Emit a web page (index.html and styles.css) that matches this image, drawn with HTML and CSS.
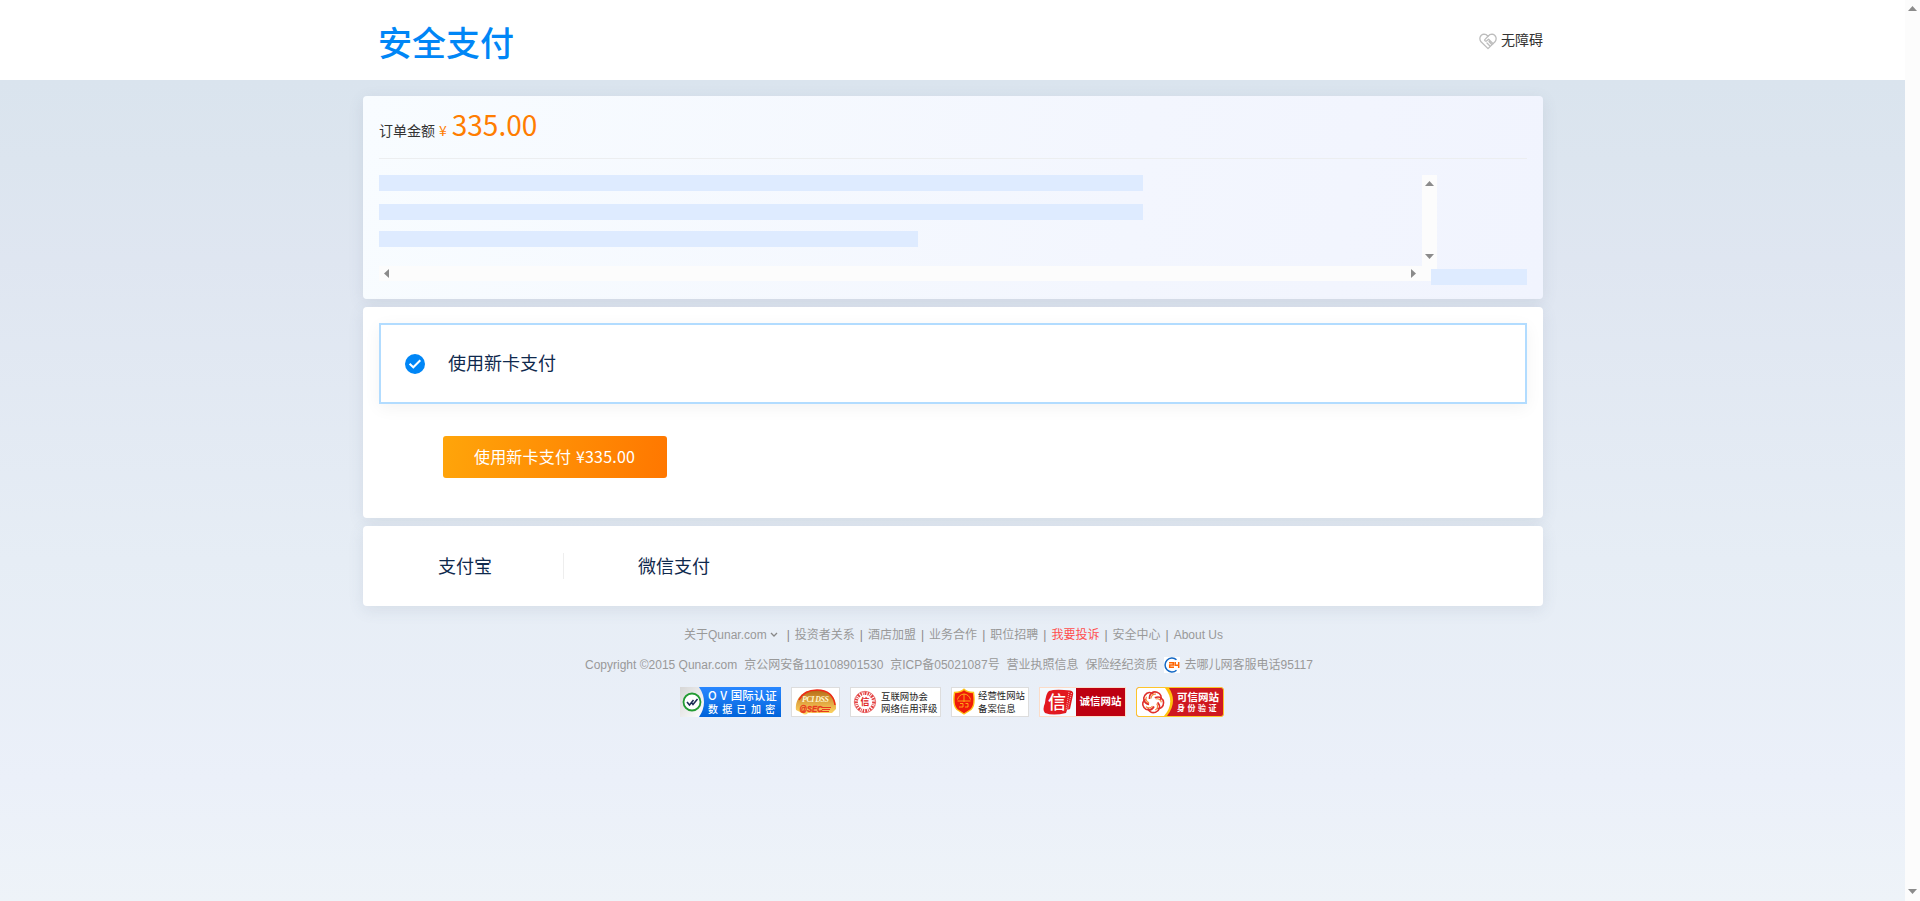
FILE: index.html
```html
<!DOCTYPE html>
<html lang="zh-CN">
<head>
<meta charset="utf-8">
<title>安全支付</title>
<link rel="stylesheet" href="styles.css">
</head>
<body>
<div class="window">
<div class="page">
  <header class="header">
    <div class="wrap header-inner">
      <h1 class="brand">安全支付</h1>
      <a class="access">
        <svg width="18" height="17" viewBox="0 0 18 17" fill="none" stroke="#bdbdbd" stroke-width="1.3" stroke-linejoin="round" stroke-linecap="round"><path d="M9 15.6 2 8.8C-.2 6 1 1.5 5 1.2c1.800 0 3 .8 4 2.100 1-1.300 2.200-2.100 4-2.100 4 .3 5.200 4.800 3 7.600z"/><path d="M9 3.300 5.800 6.600c-.6 1.400 1 2 2 1.200l1.800-1.500 4.500 4.300M8 10l2.700 2.800M10 8.500l2.600 2.800"/></svg>
        <span>无障碍</span>
      </a>
    </div>
  </header>
  <main class="wrap main">
    <section class="card order">
      <div class="amount"><span class="amount-label">订单金额</span><span class="yen">¥</span><span class="price">335.00</span></div>
      <div class="detail">
        <div class="scrollbox">
          <div class="lines"><i class="bar"></i><i class="bar second"></i><i class="bar short"></i></div>
          <div class="vbar"><i class="up"></i><i class="down"></i></div>
          <div class="hbar"><i class="left"></i><i class="right"></i></div>
        </div>
        <i class="bar toggle"></i>
      </div>
    </section>
    <section class="card newcard">
      <div class="choice">
        <svg width="20" height="20" viewBox="0 0 20 20"><circle cx="10" cy="10" r="10" fill="#0086f6"/><path d="M4.600 9.800 8.300 13.300 15.300 6.200" fill="none" stroke="#fff" stroke-width="2"/></svg>
        <span>使用新卡支付</span>
      </div>
      <button class="pay">使用新卡支付 ¥335.00</button>
    </section>
    <section class="card third">
      <div class="way ali">支付宝</div>
      <div class="way">微信支付</div>
    </section>
  </main>
  <footer class="footer">
    <nav class="links">
      <a>关于Qunar.com</a><svg class="chev" width="8" height="6" viewBox="0 0 8 6" fill="none" stroke="#888" stroke-width="1.300"><path d="M1 1l3 3 3-3"/></svg>
      <i>|</i><a>投资者关系</a><i>|</i><a>酒店加盟</a><i>|</i><a>业务合作</a><i>|</i><a>职位招聘</a><i>|</i><a class="red">我要投诉</a><i>|</i><a>安全中心</a><i>|</i><a>About Us</a>
    </nav>
    <div class="copy">
      <span>Copyright ©2015 Qunar.com</span><span>京公网安备110108901530</span><span>京ICP备05021087号</span><span>营业执照信息</span><span>保险经纪资质</span>
      <svg class="service" width="16" height="16" viewBox="0 0 16 16"><path fill="#fff" d="M0 0h16v16H0z"/><path d="M12.500 2.800A6.900 6.900 0 1 0 12.500 13.200" fill="none" stroke="#1267c4" stroke-width="1.500"/><path d="M5 5.700h4.300v2.300H5.700v2.300h4.300M11.200 5v3.300h4M14.700 5v6" fill="none" stroke="#f60" stroke-width="1.500"/></svg><span>去哪儿网客服电话95117</span>
    </div>
    <div class="badges">
      <div class="badge ov">
        <svg width="25" height="30" viewBox="0 0 25 30"><defs><linearGradient id="silver" y2="1"><stop stop-color="#d6d6d6"/><stop offset="1" stop-color="#fff"/></linearGradient></defs><path d="M0 0h19q10 15 0 30H0z" fill="url(#silver)"/><circle cx="12" cy="15" r="8.500" fill="#fff" stroke="#229b32" stroke-width="1.800"/><path d="m7 15 2.500 3 4-5M11.500 15.500l1.500 2 4.500-5.500" fill="none" stroke="#1c2a55" stroke-width="1.600"/></svg>
        <div class="ov-text"><b class="ov-top">O V 国际认证</b><b class="ov-bottom">数据已加密</b></div>
      </div>
      <div class="badge pci">
        <svg width="47" height="28" viewBox="0 0 47 28"><defs><linearGradient id="gold" x2="0" y2="1"><stop stop-color="#b36b16"/><stop offset=".45" stop-color="#dea03c"/><stop offset="1" stop-color="#ffd965"/></linearGradient></defs><path d="M4 22C3 11 10 2 24 2s21 8 20 19l-4 4H16q-3 3-6 0z" fill="url(#gold)"/><path d="M7 12Q12 2 25 2q16 0 18 15" fill="none" stroke="#ef2a16" stroke-width="1.500"/><text x="10" y="13.500" textLength="27" font-family="Liberation Serif" font-style="italic" font-size="8" font-weight="bold" fill="#fff8d0">PCI DSS</text><text x="7.500" y="24" textLength="23" lengthAdjust="spacingAndGlyphs" font-family="Liberation Sans" font-style="italic" font-size="8.500" font-weight="bold" fill="#e8391d" stroke="#e8391d" stroke-width=".4">@SEC</text><path d="M30 19.500h9M30 21.500h8M29 23.500h8" stroke="#e8391d"/></svg>
      </div>
      <div class="badge credit">
        <svg width="24" height="26" viewBox="0 0 24 26"><circle cx="12" cy="13" r="8.800" fill="none" stroke="#e34242" stroke-width="3.400" stroke-dasharray="1.500 1 .8 .9 2 1.100"/><circle cx="12" cy="13" r="10.700" fill="none" stroke="#e34242" stroke-width=".7"/><circle cx="12" cy="13" r="6" fill="#fff"/><text x="7.500" y="16.300" font-family="Noto Sans CJK SC" font-size="9" font-weight="bold" fill="#df2020">信</text></svg>
        <p>互联网协会<br>网络信用评级</p>
      </div>
      <div class="badge record">
        <svg width="25" height="28" viewBox="0 0 25 28"><path d="M12 1.300Q15 4.500 21.500 4.500q2 13-2.500 17-3 2-7 4.500-4-2.500-7-4.500Q.5 17.500 2.500 4.500 9 4.500 12 1.300z" fill="#ef1a08" stroke="#ffc21a" stroke-width="1.400"/><path d="M5.500 11.500q1.500-5 6.500-5.500 5 .5 6.500 5.500M5.500 13h13M12 6v8M8 15.500h3v3.500H7M13.500 15.500H16v3.500h-3" fill="none" stroke="#ffb31a" stroke-width=".9"/></svg>
        <p>经营性网站<br>备案信息</p>
      </div>
      <div class="badge honest">
        <svg width="36" height="28" viewBox="0 0 36 28"><path d="M9 3Q15 1 30 2.500q4 .5 3 4.500l-3 14-3 1-1 3Q13 28 5 25q-3-3 0-10Q6 5 9 3z" fill="#e21820"/><path d="M29 4l-3 18M31.500 5l-4 17" stroke="#fff" stroke-width=".7" stroke-dasharray="1 1"/><text x="8" y="20.500" font-family="Noto Sans CJK SC" font-size="18" font-weight="500" fill="#fff">信</text></svg>
        <b>诚信网站</b>
      </div>
      <div class="badge trust">
        <svg width="38" height="28" viewBox="0 0 38 28"><path d="M0 0h32q9 14-2 28H0z" fill="#ffc20c"/><path d="M0 0h28q11 14-1 28H0z" fill="#fff"/><g fill="none" stroke-width="1.600"><path id="petal" stroke="#e0302a" d="M12.500 11C12 5.500 16 3 20 4.200 24 5.500 25 9 23.500 12"/><use href="#petal" transform="rotate(72 16 14)"/><use href="#petal" transform="rotate(144 16 14)"/><use href="#petal" transform="rotate(216 16 14)"/><use href="#petal" transform="rotate(288 16 14)"/><path id="swirl" stroke="#f58a3a" stroke-width="1.200" d="M14 10.500c0-3 2.500-4.800 5-4.300"/><use href="#swirl" transform="rotate(72 16 14)"/><use href="#swirl" transform="rotate(144 16 14)"/><use href="#swirl" transform="rotate(216 16 14)"/><use href="#swirl" transform="rotate(288 16 14)"/></g></svg>
        <div class="trust-text"><b>可信网站</b><b class="small">身份验证</b></div>
      </div>
    </div>
  </footer>
</div>
<div class="page-scroll"><i class="up"></i><i class="down"></i></div>
</div>
</body>
</html>
```
FILE: styles.css
```css
* { box-sizing: border-box; }
body { margin: 0; overflow: hidden; font-family: "Liberation Sans", "Noto Sans CJK SC", sans-serif; color: #333; }
i { font-style: normal; }
p, h1 { margin: 0; }
svg { display: block; flex: none; }
.window { display: flex; height: 901px; }
.page { width: 1905px; height: 901px; background: linear-gradient(#dae4ee 80px, #dce5ef 160px, #dfe6f1 260px, #e6edf5 560px, #ebf0f9 780px, #eef3f8 901px); }
.wrap { width: 1180px; margin: 0 0 0 363px; }
.header { height: 80px; background: #fff; }
.header-inner { height: 80px; display: flex; justify-content: space-between; padding-left: 16px; }
.brand { font: 500 34px/80px "Noto Sans CJK SC", sans-serif; color: #0086f6; padding-top: 2px; margin-left: -1px; }
.access { display: flex; align-items: flex-start; gap: 4px; font: 14px/20px "Noto Sans CJK SC", sans-serif; padding-top: 29px; }
.access svg { margin-top: 4px; }
.main { padding-top: 16px; display: flex; flex-direction: column; gap: 8px; }
.card { background: #fff; border-radius: 4px; box-shadow: 0 4px 16px rgba(69, 88, 115, .11); }
.order { height: 203px; padding: 0 16px; background: linear-gradient(100deg, #f8fcff, #f3f6fe 65%, #f1f4fe); }
.amount { height: 63px; border-bottom: 1px solid #eceef0; display: flex; align-items: baseline; font: 14px/57px "Noto Sans CJK SC", sans-serif; }
.yen { color: #ff7d00; margin: 0 5px 0 4px; }
.price { color: #ff7d00; font-size: 28px; }
.detail { display: flex; align-items: flex-end; margin-top: 16px; height: 110px; }
.scrollbox { width: 1052px; height: 110px; display: grid; grid-template-columns: 1043px 15px; grid-template-rows: 91px 15px; }
.bar { display: block; width: 764px; height: 16px; background: #deebff; }
.second { margin-top: 13px; }
.short { width: 539px; margin-top: 11px; }
.toggle { width: 96px; position: relative; }
.vbar, .hbar, .page-scroll { background: #fcfcfc; display: flex; justify-content: space-between; align-items: center; }
.vbar { flex-direction: column; padding: 6px 0 7px; }
.hbar { grid-column: 1 / 3; padding: 0 21px 0 5px; }
.up, .down { width: 9px; height: 5px; background: #8b8b8b; }
.up { clip-path: polygon(50% 0, 100% 100%, 0 100%); }
.down { clip-path: polygon(0 0, 100% 0, 50% 100%); }
.left, .right { width: 5px; height: 9px; background: #8b8b8b; }
.left { clip-path: polygon(0 50%, 100% 0, 100% 100%); }
.right { clip-path: polygon(0 0, 100% 50%, 0 100%); }
.page-scroll { width: 15px; flex-direction: column; padding: 6px 0 7px; }
.newcard { height: 211px; padding: 16px; }
.choice { height: 81px; border: 2px solid #b2dcff; background: #fff; box-shadow: 0 4px 16px rgba(0, 0, 0, .05); display: flex; align-items: center; gap: 23px; padding-left: 24px; font: 400 18px/26px "Noto Sans CJK SC", sans-serif; color: #0f294d; }
.choice span { padding-bottom: 4px; }
.pay { display: block; width: 224px; height: 42px; margin: 32px 0 0 64px; border: 0; padding: 0 1px 2px 0; border-radius: 3px; background: linear-gradient(100deg, #ffa50a, #ff7700); color: #fff; font: 16px/40px "Noto Sans CJK SC", sans-serif; word-spacing: 1px; letter-spacing: .2px; }
.third { height: 80px; display: flex; align-items: center; padding-left: 75px; font: 400 18px/26px "Noto Sans CJK SC", sans-serif; color: #0f294d; }
.way { height: 26px; line-height: 24px; }
.ali { width: 126px; border-right: 1px solid #eee; margin-right: 74px; }
.footer { color: #999; font-size: 12px; padding-top: 20px; }
.links { display: flex; align-items: baseline; height: 20px; line-height: 18px; margin-left: 684px; white-space: nowrap; }
.links i { margin: 0 5px; color: #888; }
.links .chev { margin: 0 5px 0 3px; align-self: flex-start; position: relative; top: 6px; }
.links .chev + i { margin-left: 4px; }
.red { color: #ff4d4d; }
.copy { display: flex; align-items: baseline; height: 20px; line-height: 18px; margin: 10px 0 0 585px; gap: 6.900px; white-space: nowrap; }
.copy .service { align-self: flex-start; margin: 1px -2.800px 0 0; }
.badges { display: flex; gap: 10px; margin: 11px 0 0 680px; }
.badge { height: 30px; display: flex; align-items: center; overflow: hidden; background: #fff; white-space: nowrap; border: 1px solid #ddd; font-family: "Noto Sans CJK SC", sans-serif; color: #222; }
.ov { width: 101px; border: 0; background: linear-gradient(#2987ff, #0063da); color: #fff; }
.ov-text { flex: 1; padding: 0 3px 0 3px; display: flex; flex-direction: column; }
.ov-top { font: 500 11.500px/13px "Noto Sans CJK SC", sans-serif; word-spacing: 1px; }
.ov-bottom { font: 500 10px/13px "Noto Sans CJK SC", sans-serif; letter-spacing: 4.300px; }
.pci { width: 49px; }
.credit { width: 91px; padding-left: 2px; }
.credit p { font-size: 9.400px; line-height: 12px; margin-left: 4px; }
.record { width: 78px; }
.record p { font-size: 9.400px; line-height: 13px; margin-left: 1px; }
.honest { width: 87px; border-color: #fbdcc8; background: #f4faff; }
.honest b { flex: 1; height: 30px; background: #bd0010; color: #fff; font-size: 10.500px; line-height: 28px; text-align: center; }
.trust { width: 88px; border-color: #fdc52b; border-radius: 3px; background: #cf1820; color: #fff; }
.trust-text { display: flex; flex-direction: column; margin-left: 2px; }
.trust-text b { font-size: 10.500px; line-height: 12px; }
.trust-text .small { font-size: 8px; line-height: 10px; letter-spacing: 2.500px; }
```
